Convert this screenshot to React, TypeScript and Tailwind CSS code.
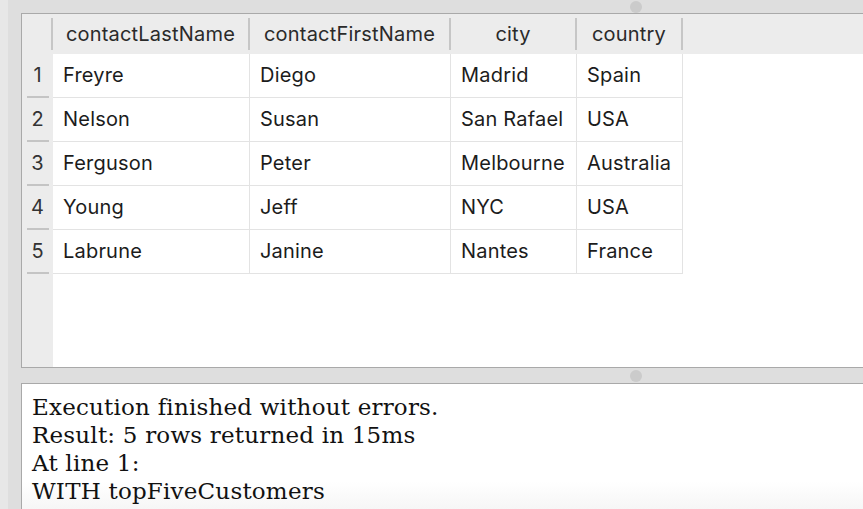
const COLUMNS = [
  { key: "last", label: "contactLastName", width: "w-[197px]" },
  { key: "first", label: "contactFirstName", width: "w-[201px]" },
  { key: "city", label: "city", width: "w-[126px]" },
  { key: "country", label: "country", width: "w-[106px]" },
] as const;

const ROWS = [
  { last: "Freyre", first: "Diego", city: "Madrid", country: "Spain" },
  { last: "Nelson", first: "Susan", city: "San Rafael", country: "USA" },
  { last: "Ferguson", first: "Peter", city: "Melbourne", country: "Australia" },
  { last: "Young", first: "Jeff", city: "NYC", country: "USA" },
  { last: "Labrune", first: "Janine", city: "Nantes", country: "France" },
];

const MESSAGES = [
  "Execution finished without errors.",
  "Result: 5 rows returned in 15ms",
  "At line 1:",
  "WITH topFiveCustomers",
];

function SplitHandle() {
  return <div className="ml-[609px] w-3 h-3 rounded-full bg-[#cbcbcb]" />;
}

function ResultGrid() {
  return (
    <div className="flex h-[355px] border-y border-l border-[#a9a9a9] bg-white">
      {/* row numbers */}
      <div className="flex flex-col w-[31px] bg-[#ececec]">
        <div className="h-[40px] flex items-center justify-end">
          <div className="w-[2px] h-[32px] bg-[#c6c6c6]" />
        </div>
        {ROWS.map((_, i) => (
          <div key={i} className="h-[44px] flex flex-col items-center">
            <div className="flex-1 flex items-center pb-[1px] text-[20px] text-[#333]">{i + 1}</div>
            <div className="w-[22px] h-[2px] bg-[#c4c4c4]" />
          </div>
        ))}
      </div>
      <div className="flex-1 flex flex-col">
        <div className="h-[40px] flex items-center bg-[#ececec]">
          {COLUMNS.map((c) => (
            <div key={c.key} className={`${c.width} h-full flex items-center`}>
              <div className="flex-1 text-center text-[20px] tracking-[0.2px] text-[#2a2a2a]">{c.label}</div>
              <div className="w-[2px] h-[32px] bg-[#c6c6c6]" />
            </div>
          ))}
        </div>
        {ROWS.map((r, i) => (
          <div key={i} className="flex h-[44px]">
            {COLUMNS.map((c) => (
              <div
                key={c.key}
                className={`${c.width} flex items-center pl-[10px] pb-[1px] border-r border-b border-[#e3e3e3] text-[20px] tracking-[0.2px] text-[#1c1c1c]`}
              >
                {r[c.key]}
              </div>
            ))}
          </div>
        ))}
      </div>
    </div>
  );
}

export default function App() {
  return (
    <div className="flex w-[863px] h-[509px] overflow-hidden bg-[#dedede] font-['Inter',sans-serif]">
      <div className="w-[8px] bg-[#e7e7e7]" />
      <div className="w-[13px] bg-[#dedede]" />
      <div className="flex-1 flex flex-col">
        <div className="h-[13px] flex items-center">
          <SplitHandle />
        </div>
        <ResultGrid />
        <div className="h-[15px] flex items-center">
          <SplitHandle />
        </div>
        <div className="flex-1 border-t border-l border-[#a9a9a9] bg-[linear-gradient(to_bottom,#ffffff_78%,#f6f6f6_100%)] pl-[10px] pt-[9px]">
          {MESSAGES.map((m) => (
            <div key={m} className="h-[28px] leading-[28px] text-[23px] tracking-[0.2px] text-[#111] font-['DejaVu_Serif',serif] whitespace-nowrap">
              {m}
            </div>
          ))}
        </div>
      </div>
    </div>
  );
}
